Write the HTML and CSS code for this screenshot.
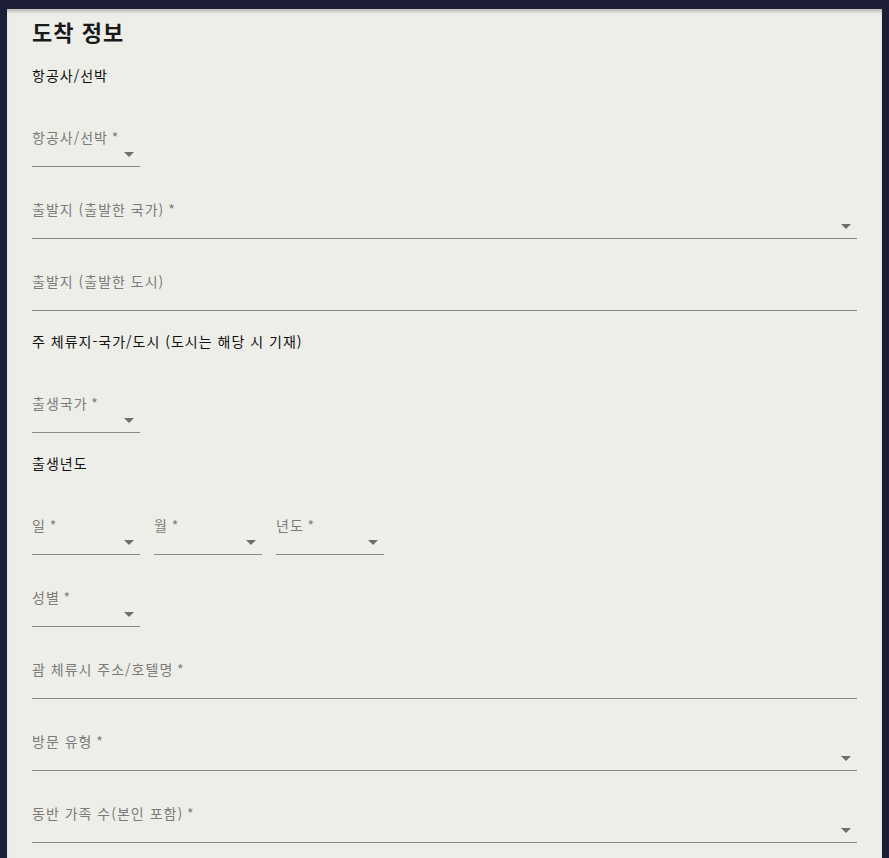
FILE: index.html
```html
<!DOCTYPE html>
<html lang="ko">
<head>
  <meta charset="UTF-8">
  <meta name="viewport" content="width=device-width, initial-scale=1">
  <title>도착 정보</title>
  <link rel="stylesheet" href="styles.css">
</head>
<body>

  <div class="card">
    <h2 class="card-title">도착 정보</h2>

    <div class="section-label">항공사/선박</div>
    <div class="field field-small select">
      <label>항공사/선박&thinsp;*</label>
    </div>

    <div class="field select">
      <label>출발지 (출발한 국가)&thinsp;*</label>
    </div>
    <div class="field">
      <label>출발지 (출발한 도시)</label>
    </div>

    <div class="section-label">주 체류지-국가/도시 (도시는 해당 시 기재)</div>
    <div class="field field-small select">
      <label>출생국가&thinsp;*</label>
    </div>

    <div class="section-label">출생년도</div>
    <div class="field-row">
      <div class="field field-small select">
        <label>일&thinsp;*</label>
      </div>
      <div class="field field-small select">
        <label>월&thinsp;*</label>
      </div>
      <div class="field field-small select">
        <label>년도&thinsp;*</label>
      </div>
    </div>

    <div class="field field-small select">
      <label>성별&thinsp;*</label>
    </div>
    <div class="field">
      <label>괌 체류시 주소/호텔명&thinsp;*</label>
    </div>
    <div class="field select">
      <label>방문 유형&thinsp;*</label>
    </div>
    <div class="field select">
      <label>동반 가족 수(본인 포함)&thinsp;*</label>
    </div>
  </div>

</body>
</html>
```

FILE: styles.css
```css
/* Basic Reset */
* {
  box-sizing: border-box;
  margin: 0;
  padding: 0;
}

html, body {
  height: 100%;
  overflow: hidden;
}

body {
  font-family: "Noto Sans CJK KR", "Noto Sans", sans-serif;
  background-color: #1c1f37;
  padding: 9px 7px 0;
}

.card {
  display: flex;
  flex-direction: column;
  background-color: #eeeee9;
  min-height: 100%;
  padding: 8px 25px 40px;
  box-shadow: inset 0 4px 3px -1px rgba(0, 0, 0, 0.2);
}

.card-title {
  font-size: 22px;
  line-height: 28px;
  font-weight: 700;
  letter-spacing: 1px;
  color: #1a1a1a;
}

.section-label {
  margin: 20px 0 10px;
  font-size: 14px;
  line-height: 20px;
  letter-spacing: 1px;
  color: #111;
}

.field {
  position: relative;
  height: 56px;
  margin-top: 16px;
  padding-top: 16px;
  border-bottom: 1px solid #8a8a87;
}

.field label {
  display: block;
  font-size: 14px;
  line-height: 20px;
  letter-spacing: 1px;
  color: #7b7b78;
}

.field-small {
  width: 108px;
}

.select::after {
  content: "";
  position: absolute;
  right: 6px;
  bottom: 9px;
  border-left: 5px solid transparent;
  border-right: 5px solid transparent;
  border-top: 5px solid #6d6d6b;
}

.field-row {
  display: flex;
  gap: 14px;
}
```
